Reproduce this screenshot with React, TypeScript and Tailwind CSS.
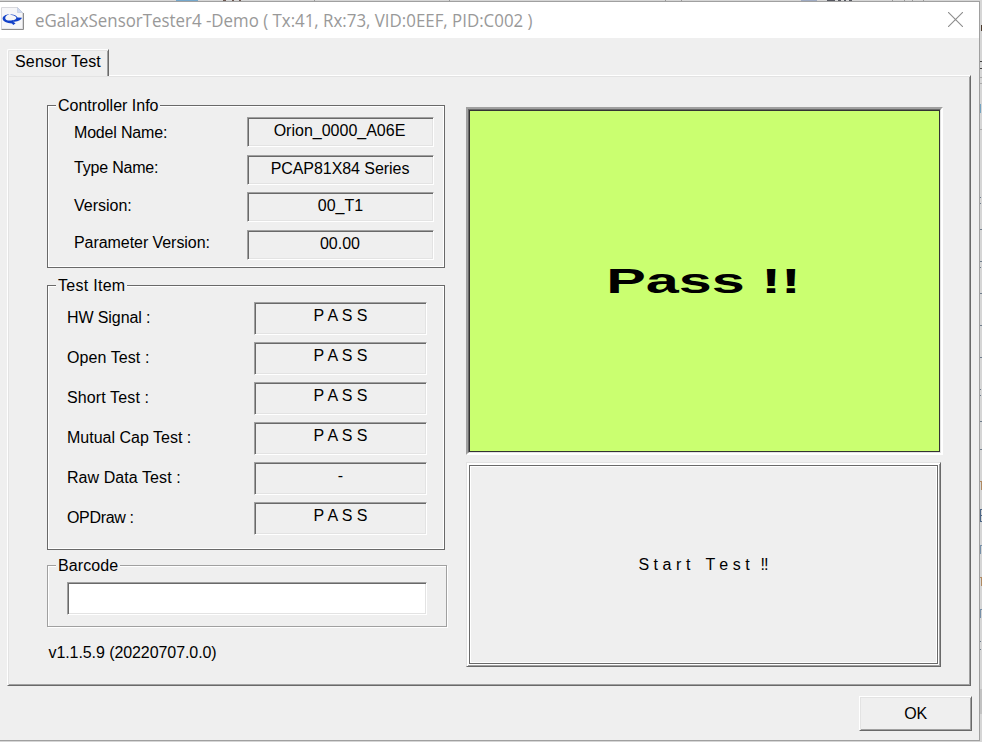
import React from "react";

const SUNKEN =
  "border border-t-[#a0a0a0] border-l-[#a0a0a0] border-b-white border-r-white shadow-[inset_1px_1px_0_#696969,inset_-1px_-1px_0_#e3e3e3]";

function Field({ className, children }: { className: string; children?: React.ReactNode }) {
  return (
    <div className={`${SUNKEN} shrink-0 text-center whitespace-pre ${className}`}>{children}</div>
  );
}

function Group({
  title,
  className,
  legendClass,
  children,
}: {
  title: string;
  className: string;
  legendClass: string;
  children: React.ReactNode;
}) {
  return (
    <section className={`flex flex-col border ${className}`}>
      <h2 className={`-mt-[9px] ml-2 h-[17px] shrink-0 bg-[#efefef] pl-[2px] whitespace-nowrap ${legendClass}`}>
        {title}
      </h2>
      {children}
    </section>
  );
}

const info = [
  { label: "Model Name:", value: "Orion_0000_A06E", row: "h-[38px]", pad: "pt-[7px] tracking-[-0.18px]", field: "pr-[2px]" },
  { label: "Type Name:", value: "PCAP81X84 Series", row: "h-[37px]", pad: "pt-[4px] tracking-[-0.2px]", field: "pr-px tracking-[-0.06px]" },
  { label: "Version:", value: "00_T1", row: "h-[38px]", pad: "pt-[5px]", field: "" },
  { label: "Parameter Version:", value: "00.00", row: "h-[37px]", pad: "pt-[4px] tracking-[-0.06px]", field: "pr-px" },
];

const tests = [
  { label: "HW Signal :", value: "P A S S", tracking: "tracking-[-0.1px]" },
  { label: "Open Test :", value: "P A S S", tracking: "tracking-[0.08px]" },
  { label: "Short Test :", value: "P A S S", tracking: "tracking-[0.12px]" },
  { label: "Mutual Cap Test :", value: "P A S S", tracking: "tracking-normal" },
  { label: "Raw Data Test :", value: "-", tracking: "tracking-[0.07px]" },
  { label: "OPDraw :", value: "P A S S", tracking: "tracking-[-0.33px]" },
];

function AppIcon() {
  return (
    <svg width="24" height="24" viewBox="0 0 24 24" className="ml-px shrink-0">
      <path d="M.5 .5H16.500L21.500 5.500V22H.5Z" fill="#f6f6f8" stroke="#d8d8dc" />
      <path d="M.5 22.500H22.500V6" fill="none" stroke="#8c8c8c" />
      <path d="M16.500 .5V5.500H21.500Z" fill="#cfdaf0" stroke="#bcc6dc" strokeWidth=".6" />
      <path
        d="M8.500 7C4.500 7.600 1.600 9.300 1.600 11.500C1.600 14.500 6 16.300 11 16.400L12.300 18L14.600 16.200L12 14.800C16 14.700 19.800 13.500 21 10.800L16.500 10.600C15 8 12 7.200 9 7.800C13 8.200 15.600 9.500 15.400 11.100C15 12.900 12 13.600 9 13.600C6 13.500 4 12.400 4.200 10.900C4.400 9 6.500 7.800 8.500 7Z"
        fill="#1140c8"
      />
    </svg>
  );
}

export default function App() {
  return (
    <div className="relative h-[742px] w-[982px] overflow-hidden bg-[#d6d6d6] pt-px font-['Liberation_Sans',Arial,sans-serif] text-[16px] leading-[18px] text-black">
      <svg className="absolute top-0 left-0" width="982" height="742" shapeRendering="crispEdges">
        <rect x="176" width="22" height="1" fill="#74a7cb" />
        <path d="M223 0h3M232 0h2M239 0h2" stroke="#6b5650" strokeWidth="2" />
        <path d="M801 0h16" stroke="#9eaac2" strokeWidth="2" />
        <path d="M827 0h8M838 0h3M844 0h2M849 0h3" stroke="#55575f" strokeWidth="2" />
        <path d="M314 .5h1M449 .5h1M665 .5h1M681 .5h1M892 .5h1M904 .5h1M912 .5h1M923 .5h1" stroke="#999" />
        <path d="M980 61.500h2M980 68.500h2" stroke="#444" />
        <path d="M980 77.500h2M980 83.500h2M980 129.500h2" stroke="#aaa" />
        <rect x="981" y="25" width="1" height="6" fill="#4b3b2d" />
        <rect x="980" y="104" width="1" height="9" fill="#75a4c1" />
        <path
          d="M980 197.500h1M980 203.500h1M980 229.500h2M980 261.500h2M980 267.500h1M980 293.500h2M980 325.500h2M980 357.500h2M980 389.500h1M980 395.500h1M980 421.500h2M980 449.500h2M980 641.500h1M980 649.500h1"
          stroke="#6f7d8c"
        />
        <path d="M980 481.500h2M981.500 482v8M980 577.500h2M981.500 578v8" stroke="#b08a62" />
        <path d="M980.500 509v13M980 509.500h2M980 515.500h2M980 521.500h2" stroke="#4d6685" />
        <path d="M980 545.500h2M980.500 546v8M980 609.500h2M980.500 610v8" stroke="#7790a8" />
        <rect x="980" y="689" width="2" height="25" fill="#c2c2c2" />
      </svg>

      <div className="relative flex h-[740px] w-[980px] flex-col border-t border-r border-b border-t-[#a0a0a0] border-r-[#a0a0a0] border-b-[#a0a0a0] bg-[#efefef]">
        <header className="flex h-9 shrink-0 items-start bg-white pt-[5px] pr-[16px]">
          <AppIcon />
          <h1 className="mt-px ml-[10px] flex-1 origin-left scale-x-[0.937] text-[18px] leading-[24px] whitespace-nowrap text-[#999] font-['Open_Sans',sans-serif]">
            eGalaxSensorTester4 -Demo ( Tx:41, Rx:73, VID:0EEF, PID:C002 )
          </h1>
          <svg width="15" height="15" viewBox="0 0 15 15" className="mt-[5px]">
            <path d="M0 0L15 15M15 0L0 15" stroke="#8d8d8d" strokeWidth="1.1" />
          </svg>
        </header>

        <div className="flex flex-1 flex-col pt-[11px] pl-[7px]">
          <div className="relative z-10 h-[27px] w-[102px] shrink-0 rounded-tl-[2px] border-t border-r border-l border-t-white border-r-[#696969] border-l-white bg-[#efefef] pt-[3px] pl-[7px] tracking-[0.16px] whitespace-nowrap shadow-[inset_1px_1px_0_#e3e3e3,inset_-1px_0_0_#a0a0a0]">
            Sensor Test
          </div>
          <main className="-mt-px flex h-[611px] w-[964px] shrink-0 border border-t-white border-r-[#696969] border-b-[#696969] border-l-white pl-[39px] shadow-[inset_1px_1px_0_#e3e3e3,inset_-1px_-1px_0_#a0a0a0]">
            <div className="flex w-[419px] shrink-0 flex-col pt-[29px]">
              <Group
                title="Controller Info"
                legendClass="w-[104px]"
                className="h-[163px] w-[398px] border-[#696969] shadow-[inset_0_0_0_1px_white]"
              >
                <div className="mt-[3px] flex flex-col pl-[26px]">
                  {info.map((r) => (
                    <div key={r.label} className={`flex ${r.row}`}>
                      <div className={`w-[173px] ${r.pad}`}>{r.label}</div>
                      <Field className={`h-[30px] w-[187px] pt-[4px] ${r.field}`}>{r.value}</Field>
                    </div>
                  ))}
                </div>
              </Group>
              <Group
                title="Test Item"
                legendClass="w-[71px] tracking-[0.28px]"
                className="mt-[17px] h-[265px] w-[398px] border-[#696969] shadow-[inset_0_0_0_1px_white]"
              >
                <div className="mt-[8px] flex flex-col gap-[7px] pl-[19px]">
                  {tests.map((r) => (
                    <div key={r.label} className="flex">
                      <div className={`w-[187px] pt-[7px] ${r.tracking}`}>{r.label}</div>
                      <Field className="h-[33px] w-[173px] pt-[4px]">{r.value}</Field>
                    </div>
                  ))}
                </div>
              </Group>
              <Group
                title="Barcode"
                legendClass="w-[64px] tracking-[0.08px]"
                className="mt-[15px] h-[62px] w-[400px] border-[#a0a0a0] shadow-[inset_1px_1px_0_white,1px_1px_0_white]"
              >
                <input className={`${SUNKEN} mt-[8px] ml-[19px] h-[33px] w-[360px] bg-white px-2 outline-none`} />
              </Group>
              <div className="mt-[17px] ml-[1px] pl-[0.5px] tracking-[-0.08px] whitespace-nowrap">
                v1.1.5.9 (20220707.0.0)
              </div>
            </div>

            <div className="flex flex-col pt-[31px]">
              <div className="h-[348px] w-[477px] border-2 border-t-[#a0a0a0] border-r-white border-b-white border-l-[#a0a0a0]">
                <div className="h-full border border-t-[#696969] border-r-[#e3e3e3] border-b-[#e3e3e3] border-l-[#696969]">
                  <div className="flex h-full items-center justify-center border border-[#333] bg-[#caff70] pr-px">
                    <span className="scale-x-[1.72] text-[34.500px] leading-[40px] font-bold">Pass !!</span>
                  </div>
                </div>
              </div>
              <button className="mt-[7px] h-[205px] w-[475px] border border-t-[#e3e3e3] border-r-[#696969] border-b-[#696969] border-l-[#e3e3e3] shadow-[inset_1px_1px_0_white,inset_-1px_-1px_0_#a0a0a0]">
                <div className="mx-px mt-px mb-px h-[201px] border border-white">
                  <div className="flex h-full items-center justify-center border border-[#696969] pt-px whitespace-pre shadow-[inset_0_0_0_1px_white]">
                    <span className="tracking-[0.05px]">S t a r t</span>
                    <span className="ml-[15px]">T e s t</span>
                    <span className="ml-[11px]">‼</span>
                  </div>
                </div>
              </button>
            </div>
          </main>
          <button className="mt-[10px] ml-[852px] h-[35px] w-[113px] border border-t-white border-r-[#696969] border-b-[#696969] border-l-white tracking-[-0.2px] shadow-[inset_1px_1px_0_#e3e3e3,inset_-1px_-1px_0_#a0a0a0]">
            OK
          </button>
        </div>
      </div>
    </div>
  );
}
